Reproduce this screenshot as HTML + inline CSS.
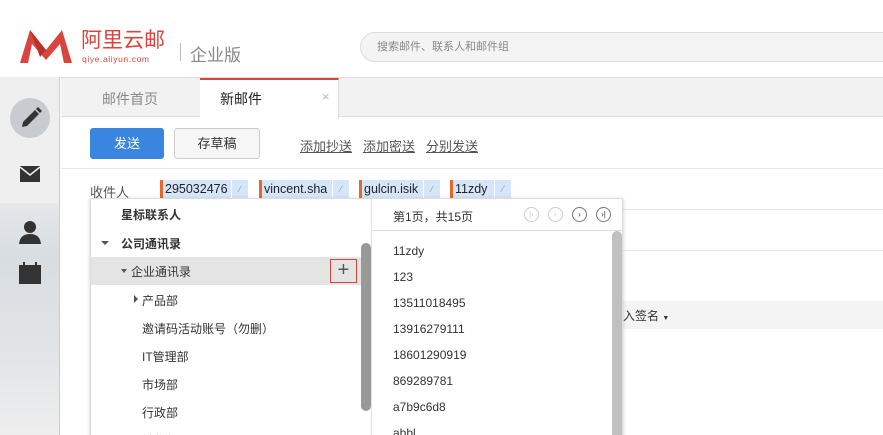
<!DOCTYPE html>
<html style="overflow:hidden;width:883px;height:435px"><head><meta charset="utf-8"><style>
*{margin:0;padding:0;box-sizing:border-box}
body{width:883px;height:435px;overflow:hidden;background:#fff;font-family:"Liberation Sans","Noto Sans CJK SC",sans-serif;position:relative;color:#333}
.a{position:absolute}
.u{text-decoration:underline;color:#555;font-size:13px}
.chip{position:absolute;top:180px;height:19px;background:#d6e6fa;border-left:3px solid #e8672a;font-size:12.5px;line-height:19px;padding-left:2px;color:#222;white-space:nowrap}
.chip i{position:absolute;right:0;top:0;width:17px;height:19px;border-left:1px solid #fff;font-style:normal;color:#999;font-size:9px;text-align:center;background:#d6e6fa}
.li{position:absolute;font-size:12px;color:#333}
.ri{position:absolute;left:393px;font-size:12px;color:#333}
.pb{position:absolute;top:207px;width:15px;height:15px;border:1px solid #ccc;border-radius:50%;font-size:8px;line-height:13px;text-align:center;color:#ccc}
.tri{position:absolute;width:0;height:0;border-left:4px solid transparent;border-right:4px solid transparent;border-top:4px solid #555}
</style></head><body>
<svg class="a" style="left:20px;top:30px" width="52" height="33" viewBox="0 0 52 33"><path d="M0 33 L10 0 L26 20 L42 0 L52 33 L44 33 L40 14 L26 30 L12 14 L8 33Z" fill="#d9443d"/><path d="M10 0 L26 20 L20 27Z" fill="#b8322c"/></svg>
<div class="a" style="left:81px;top:29px;font-size:21px;color:#d9443d;line-height:24px">阿里云邮</div>
<div class="a" style="left:82px;top:54px;font-size:8.5px;color:#d9443d;letter-spacing:.6px">qiye.aliyun.com</div>
<div class="a" style="left:180px;top:43px;width:1px;height:18px;background:#bbb"></div>
<div class="a" style="left:190px;top:41px;font-size:17px;color:#888">企业版</div>
<div class="a" style="left:360px;top:32px;width:540px;height:30px;border:1px solid #ddd;border-radius:15px;background:#f4f4f4;font-size:11px;color:#888;line-height:28px;padding-left:16px">搜索邮件、联系人和邮件组</div>
<div class="a" style="left:0;top:77px;width:60px;height:358px;background:linear-gradient(#efefef 0,#efefef 126px,#e4e7ea 127px,#d8dde2 180px,#e2e5e7 280px,#eeeeee 358px);border-right:1px solid #ccc"></div>
<div class="a" style="left:10px;top:98px;width:40px;height:40px;border-radius:50%;background:#c8ccd1"></div>
<svg class="a" style="left:20px;top:107px" width="22" height="22" viewBox="0 0 22 22"><path d="M2 20 L3 15 L15 3 L19 7 L7 19Z" fill="#333"/><path d="M16 2 L18 0 L22 4 L20 6Z" fill="#333"/></svg>
<svg class="a" style="left:20px;top:166px" width="20" height="16" viewBox="0 0 20 16"><rect width="20" height="16" fill="#333"/><path d="M0 1 L10 9 L20 1" stroke="#efefef" stroke-width="1.5" fill="none"/></svg>
<svg class="a" style="left:19px;top:220px" width="22" height="24" viewBox="0 0 22 24"><circle cx="11" cy="7" r="6" fill="#333"/><path d="M0 24 Q1 14 11 14 Q21 14 22 24Z" fill="#333"/></svg>
<svg class="a" style="left:19px;top:262px" width="22" height="22" viewBox="0 0 22 22"><path d="M0 3 H4 V0 H6 V3 H16 V0 H18 V3 H22 V22 H0Z" fill="#333"/></svg>
<div class="a" style="left:61px;top:77px;width:822px;height:40px;background:#f2f2f2;border-top:1px solid #ddd;border-bottom:1px solid #ddd"></div>
<div class="a" style="left:102px;top:89px;font-size:14px;color:#888">邮件首页</div>
<div class="a" style="left:200px;top:78px;width:139px;height:40px;background:#fff;border-top:2px solid #d9443d;border-right:1px solid #ddd"></div>
<div class="a" style="left:220px;top:89px;font-size:14px;color:#222">新邮件</div>
<div class="a" style="left:322px;top:89px;font-size:13px;color:#bbb">×</div>
<div class="a" style="left:90px;top:128px;width:74px;height:31px;background:#3a85e0;border-radius:3px;color:#fff;font-size:13px;text-align:center;line-height:31px">发送</div>
<div class="a" style="left:174px;top:128px;width:86px;height:31px;background:#f6f6f6;border:1px solid #ccc;border-radius:3px;font-size:13px;text-align:center;line-height:29px;color:#333">存草稿</div>
<div class="a u" style="left:300px;top:136px">添加抄送</div>
<div class="a u" style="left:363px;top:136px">添加密送</div>
<div class="a u" style="left:426px;top:136px">分别发送</div>
<div class="a" style="left:61px;top:168px;width:822px;height:1px;background:#e8e8e8"></div>
<div class="a u" style="left:90px;top:182px">收件人</div>
<div class="chip" style="left:160px;width:88px">295032476<i>⁄</i></div>
<div class="chip" style="left:259px;width:90px">vincent.sha<i>⁄</i></div>
<div class="chip" style="left:359px;width:81px">gulcin.isik<i>⁄</i></div>
<div class="chip" style="left:450px;width:61px">11zdy<i>⁄</i></div>
<div class="a" style="left:623px;top:209px;width:260px;height:1px;background:#e8e8e8"></div>
<div class="a" style="left:623px;top:250px;width:260px;height:1px;background:#e8e8e8"></div>
<div class="a" style="left:610px;top:301px;width:273px;height:28px;background:#f4f4f4"></div>
<div class="a" style="left:623px;top:307px;font-size:12px;color:#333">入签名 <span style="font-size:7px">▼</span></div>
<div class="a" style="left:90px;top:198px;width:533px;height:240px;background:#fff;border:1px solid #ddd;box-shadow:0 1px 4px rgba(0,0,0,.2)"></div>
<div class="a" style="left:371px;top:199px;width:1px;height:236px;background:#e2e2e2"></div>
<div class="li" style="left:121px;top:206px;font-weight:bold">星标联系人</div>
<div class="tri" style="left:101px;top:241px"></div>
<div class="li" style="left:121px;top:235px;font-weight:bold">公司通讯录</div>
<div class="a" style="left:91px;top:257px;width:270px;height:28px;background:#e4e4e4"></div>
<div class="tri" style="left:121px;top:269px;border-width:4px 3.5px 0 3.5px"></div>
<div class="li" style="left:131px;top:263px">企业通讯录</div>
<div class="a" style="left:330px;top:259px;width:27px;height:24px;border:1px solid #d9443d;font-size:20px;line-height:20px;text-align:center;color:#555">+</div>
<div class="a" style="left:134px;top:295px;width:0;height:0;border-top:4px solid transparent;border-bottom:4px solid transparent;border-left:4px solid #555"></div>
<div class="li" style="left:142px;top:292px">产品部</div>
<div class="li" style="left:142px;top:320px">邀请码活动账号（勿删）</div>
<div class="li" style="left:142px;top:348px">IT管理部</div>
<div class="li" style="left:142px;top:376px">市场部</div>
<div class="li" style="left:142px;top:404px">行政部</div>
<div class="li" style="left:142px;top:432px">销售部</div>
<div class="a" style="left:361px;top:243px;width:10px;height:168px;background:#999;border-radius:5px"></div>
<div class="ri" style="top:208px">第1页，共15页</div>
<div class="pb" style="left:524px">|‹</div>
<div class="pb" style="left:548px">‹</div>
<div class="pb" style="left:572px;border-color:#777;color:#333">›</div>
<div class="pb" style="left:596px;border-color:#777;color:#333">›|</div>
<div class="a" style="left:372px;top:230px;width:250px;height:1px;background:#ddd"></div>
<div class="ri" style="top:244px">11zdy</div>
<div class="ri" style="top:270px">123</div>
<div class="ri" style="top:296px">13511018495</div>
<div class="ri" style="top:322px">13916279111</div>
<div class="ri" style="top:348px">18601290919</div>
<div class="ri" style="top:374px">869289781</div>
<div class="ri" style="top:400px">a7b9c6d8</div>
<div class="ri" style="top:426px">abbl</div>
<div class="a" style="left:612px;top:231px;width:10px;height:210px;background:#c0c0c0;border-radius:5px"></div>
</body></html>
